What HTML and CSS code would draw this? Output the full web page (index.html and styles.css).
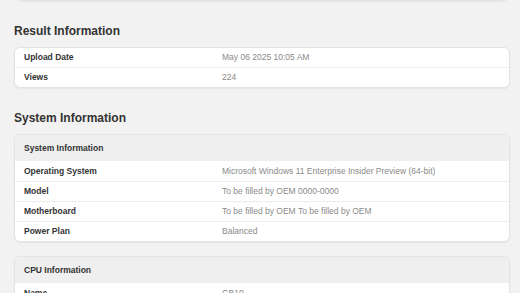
FILE: index.html
```html
<!DOCTYPE html>
<html lang="en">
<head>
    <meta charset="UTF-8">
    <meta name="viewport" content="width=device-width, initial-scale=1.0">
    <title>Benchmark Result</title>
    <link rel="stylesheet" href="styles.css">
</head>
<body>
<div class="container">
    <div class="card card-tail"></div>

    <h2>Result Information</h2>
    <div class="card">
        <div class="row">
            <div class="name">Upload Date</div>
            <div class="value">May 06 2025 10:05 AM</div>
        </div>
        <div class="row">
            <div class="name">Views</div>
            <div class="value">224</div>
        </div>
    </div>

    <h2>System Information</h2>
    <div class="card">
        <div class="card-head">System Information</div>
        <div class="row">
            <div class="name">Operating System</div>
            <div class="value">Microsoft Windows 11 Enterprise Insider Preview (64-bit)</div>
        </div>
        <div class="row">
            <div class="name">Model</div>
            <div class="value">To be filled by OEM 0000-0000</div>
        </div>
        <div class="row">
            <div class="name">Motherboard</div>
            <div class="value">To be filled by OEM To be filled by OEM</div>
        </div>
        <div class="row">
            <div class="name">Power Plan</div>
            <div class="value">Balanced</div>
        </div>
    </div>

    <div class="card">
        <div class="card-head">CPU Information</div>
        <div class="row">
            <div class="name">Name</div>
            <div class="value">GB10</div>
        </div>
        <div class="row">
            <div class="name">Topology</div>
            <div class="value">1 Processor, 20 Cores</div>
        </div>
    </div>
</div>
</body>
</html>
```

FILE: styles.css
```css
body {
    font-family: "Liberation Sans", Arial, sans-serif;
    font-variant-ligatures: none;
    background-color: #f2f2f2;
    margin: 0;
    padding: 0;
}

.container {
    padding: 0 10px 0 14px;
}

h2 {
    font-size: 12px;
    line-height: 15px;
    font-weight: bold;
    color: #333;
    margin: 23px 0 8px;
}

.card {
    background-color: #fff;
    border: 1px solid #e3e3e3;
    border-radius: 6px;
    box-shadow: 0 1px 2px rgba(0, 0, 0, 0.06);
    overflow: hidden;
    margin-bottom: 14px;
}

/* bottom edge of the card above the fold */
.card-tail {
    height: 30px;
    margin: -31px 2px 0;
}

.card-head {
    height: 26px;
    line-height: 27px;
    padding-left: 9px;
    background-color: #efefef;
    font-size: 8.5px;
    font-weight: bold;
    color: #333;
}

.row {
    display: grid;
    grid-template-columns: 207px 1fr;
    height: 19px;
    line-height: 19px;
    font-size: 8.5px;
}

.row + .row {
    border-top: 1px solid #ececec;
}

.card-head + .row {
    height: 20px;
    line-height: 20px;
}

.name {
    padding-left: 9px;
    font-weight: bold;
    color: #333;
}

.value {
    color: #8a8a8a;
    white-space: nowrap;
}
```
